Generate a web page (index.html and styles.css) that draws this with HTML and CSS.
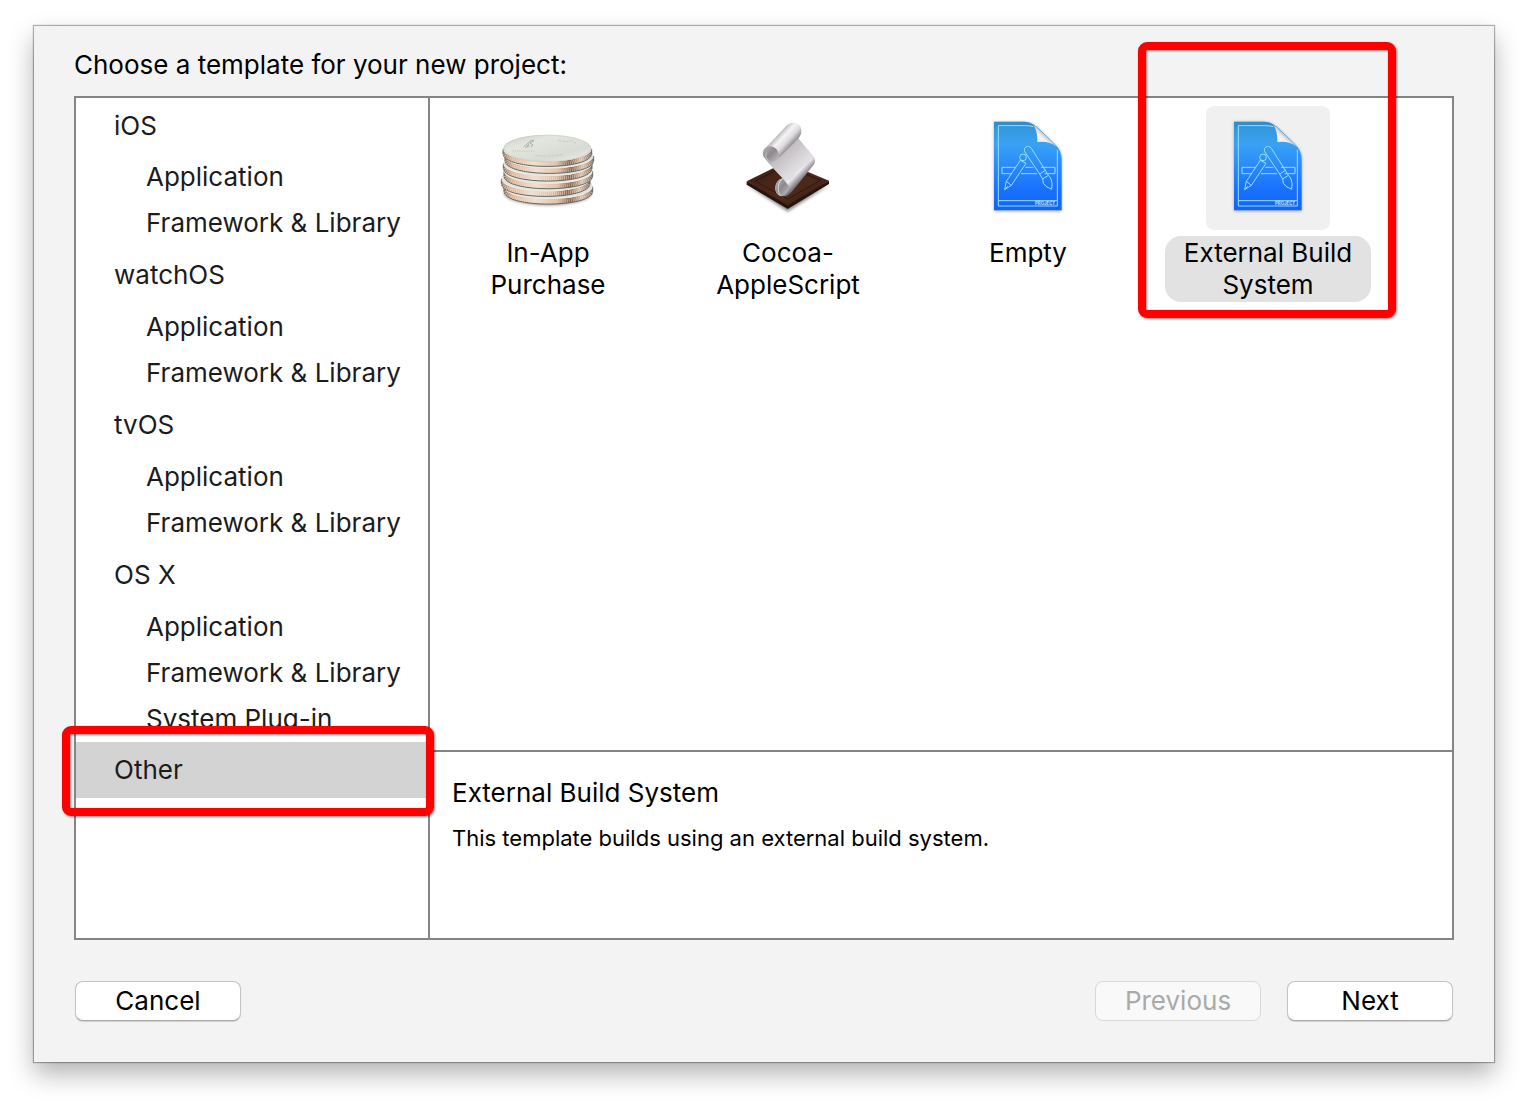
FILE: index.html
```html
<!DOCTYPE html>
<html lang="en">
<head>
  <meta charset="UTF-8">
  <meta name="viewport" content="width=device-width, initial-scale=1.0">
  <title>New Project</title>
  <link rel="stylesheet" href="styles.css">
</head>
<body>
  <main class="dialog">
    <h1>Choose a template for your new project:</h1>

    <div class="chooser">
      <!-- Platform list -->
      <nav class="sidebar">
        <section>
          <a class="platform" href="#ios">iOS</a>
          <ul>
            <li><a href="#ios-app">Application</a></li>
            <li><a href="#ios-lib">Framework &amp; Library</a></li>
          </ul>
        </section>
        <section>
          <a class="platform" href="#watchos">watchOS</a>
          <ul>
            <li><a href="#watchos-app">Application</a></li>
            <li><a href="#watchos-lib">Framework &amp; Library</a></li>
          </ul>
        </section>
        <section>
          <a class="platform" href="#tvos">tvOS</a>
          <ul>
            <li><a href="#tvos-app">Application</a></li>
            <li><a href="#tvos-lib">Framework &amp; Library</a></li>
          </ul>
        </section>
        <section>
          <a class="platform" href="#osx">OS X</a>
          <ul>
            <li><a href="#osx-app">Application</a></li>
            <li><a href="#osx-lib">Framework &amp; Library</a></li>
            <li><a href="#osx-plugin">System Plug-in</a></li>
          </ul>
        </section>
        <a class="platform selected" href="#other">Other<span class="highlight"></span></a>
      </nav>

      <div class="content">
        <!-- Template icons -->
        <div class="templates">
          <button type="button" class="template">
            <svg class="icon" viewBox="-12 -42 372 372" aria-hidden="true">
              <defs>
                <linearGradient id="copper">
                  <stop offset="0" stop-color="#94745f"/>
                  <stop offset=".1" stop-color="#dcb497"/>
                  <stop offset=".35" stop-color="#f0dccd"/>
                  <stop offset=".6" stop-color="#dfb89c"/>
                  <stop offset=".75" stop-color="#85604a"/>
                  <stop offset=".88" stop-color="#dcc0ab"/>
                  <stop offset="1" stop-color="#7d6a5e"/>
                </linearGradient>
                <linearGradient id="silver" x2="1" y2="1">
                  <stop offset="0" stop-color="#c9cdc6"/>
                  <stop offset=".3" stop-color="#e3e6df"/>
                  <stop offset=".7" stop-color="#d8dbd3"/>
                  <stop offset="1" stop-color="#f0f1ed"/>
                </linearGradient>
                <filter id="soft" x="-20%" y="-50%" width="140%" height="200%"><feGaussianBlur stdDeviation="4"/></filter>
                <g id="coin">
                  <path d="M0 46V59C0 110 266 110 266 59V46Z" fill="url(#copper)" stroke="#676860" stroke-width="3"/>
                  <path d="M4 59C14 100 252 100 262 59" fill="none" stroke="#fbeee3" stroke-width="11" stroke-dasharray="2 4" opacity=".6"/>
                  <ellipse cx="133" cy="43" rx="132" ry="40" fill="#e0e2dc"/>
                  <path d="M2 47C14 91 252 91 264 47" fill="none" stroke="#e9eae6" stroke-width="4"/>
                </g>
              </defs>
              <ellipse cx="174" cy="218" rx="132" ry="38" fill="#555" opacity=".65" filter="url(#soft)"/>
              <use href="#coin" x="42" y="155"/>
              <use href="#coin" x="34" y="132"/>
              <use href="#coin" x="42" y="109"/>
              <use href="#coin" x="40" y="86"/>
              <use href="#coin" x="45" y="63"/>
              <use href="#coin" x="39" y="42"/>
              <ellipse cx="172" cy="85" rx="130" ry="40" fill="url(#silver)" stroke="#aeb2a9" stroke-width="1"/>
              <path d="M100 81l12-9 7-8 13-3-12 9 8 4-5 8M117 71l-6 9M106 83l13-6" fill="none" stroke="#8d9388" stroke-width="2"/>
              <path d="M67 92q32 3 64 1" fill="none" stroke="#d8c8ba" stroke-width="5" stroke-dasharray="3 4"/>
              <path d="M136 106q43 6 82-3M205 61l24 5 12-5 20 10" fill="none" stroke="#c6cac2" stroke-width="3" stroke-dasharray="8 4"/>
            </svg>
            <span class="label">In-App<br>Purchase</span>
          </button>

          <button type="button" class="template">
            <svg class="icon" viewBox="-12 -12 372 372" aria-hidden="true">
              <defs>
                <linearGradient id="wood" x2="1" y2="1">
                  <stop offset="0" stop-color="#3c2015"/>
                  <stop offset=".6" stop-color="#4c2a1b"/>
                  <stop offset="1" stop-color="#321a11"/>
                </linearGradient>
                <linearGradient id="paper" gradientUnits="userSpaceOnUse" x1="130" y1="110" x2="215" y2="205">
                  <stop offset="0" stop-color="#9b979b"/>
                  <stop offset=".3" stop-color="#c4c0c4"/>
                  <stop offset=".7" stop-color="#dedbde"/>
                  <stop offset="1" stop-color="#e8e6e8"/>
                </linearGradient>
                <linearGradient id="roll" gradientUnits="userSpaceOnUse" x1="140" y1="75" x2="178" y2="110">
                  <stop offset="0" stop-color="#b5b2b5"/>
                  <stop offset=".35" stop-color="#f5f4f5"/>
                  <stop offset=".7" stop-color="#dddbdd"/>
                  <stop offset="1" stop-color="#9a969a"/>
                </linearGradient>
                <linearGradient id="roll-end" x2="1" y2="1">
                  <stop offset="0" stop-color="#b9b6b9"/>
                  <stop offset=".5" stop-color="#8d888c"/>
                  <stop offset="1" stop-color="#c3c0c3"/>
                </linearGradient>
                <linearGradient id="lower-roll" gradientUnits="userSpaceOnUse" x1="190" y1="172" x2="222" y2="203">
                  <stop offset="0" stop-color="#d3d0d3"/>
                  <stop offset=".45" stop-color="#efedef"/>
                  <stop offset="1" stop-color="#777276"/>
                </linearGradient>
              </defs>
              <path d="M48 224L173 305 300 224 173 280Z" fill="#555" opacity=".65" filter="url(#soft)"/>
              <path d="M50 214V224L173 297 297 222V212L173 275Z" fill="#28140d"/>
              <path d="M50 214L165 157 297 212 173 286Z" fill="url(#wood)"/>
              <path d="M75 214L165 167 272 211 173 268Z" fill="none" stroke="#2b150e" stroke-width="3"/>
              <path d="M77 217L173 271 270 214" fill="none" stroke="#60391f" stroke-width="1"/>
              <!-- sheet between the two rolls -->
              <path d="M99 134Q103 148 158 205Q176 222 180 240L250 160 253 142 206 86 145 95Z" fill="url(#paper)"/>
              <!-- bottom roll -->
              <path d="M158 205C146 207 136 219 136 235 136 252 148 260 162 259 172 258 181 251 188 242L250 166C257 158 257 146 248 136 251 147 247 151 240 156 220 165 194 191 183 212Z" fill="url(#lower-roll)"/>
              <path d="M158 205C145 208 136 219 136 235 137 247 142 254 151 257 165 256 177 246 177 229Z" fill="url(#roll-end)"/>
              <path d="M158 205C144 218 140 238 151 257" fill="none" stroke="#dddadd" stroke-width="3"/>
              <!-- top roll -->
              <path d="M107 113L168 49C180 34 205 35 212 51Q218 69 207 83L146 145C147 128 134 108 107 113Z" fill="url(#roll)"/>
              <path d="M99 134C97 116 109 107 124 109 143 113 150 132 144 146 138 153 128 157 118 153 109 148 101 142 99 134Z" fill="url(#roll-end)"/>
              <path d="M118 153C108 148 104 138 110 127" fill="none" stroke="#b9b5b9" stroke-width="4"/>
            </svg>
            <span class="label">Cocoa-<br>AppleScript</span>
          </button>

          <button type="button" class="template">
            <svg class="icon" viewBox="-42 -12 372 372" aria-hidden="true">
              <defs>
                <linearGradient id="blueprint" x2="0" y2="1">
                  <stop offset="0" stop-color="#2c8bc8"/>
                  <stop offset=".08" stop-color="#3598dc"/>
                  <stop offset=".25" stop-color="#39a2f5"/>
                  <stop offset=".8" stop-color="#176eff"/>
                  <stop offset="1" stop-color="#1264ef"/>
                </linearGradient>
                <linearGradient id="fold" x1="0" y1="1" x2="1" y2="0">
                  <stop offset="0" stop-color="#fff"/>
                  <stop offset=".4" stop-color="#f0f0f0"/>
                  <stop offset=".55" stop-color="#bbb"/>
                </linearGradient>
                <g id="project">
                  <path d="M42 36H132C151 36 166 48 178 60L225 105Q245 125 245 151V304H42Z" fill="#555" opacity=".5" filter="url(#soft)"/>
                  <path d="M42 35H132C151 35 166 45 178 57L225 103Q245 122 245 148V301H42Z" fill="url(#blueprint)"/>
                  <path d="M160 45Q173 62 172 96 205 91 231 110L178 59Q170 50 160 45Z" fill="url(#fold)"/>
                  <g fill="none" stroke="#9bddff" stroke-width="3">
                    <path d="M160 50Q151 47 135 47H55V288H232V119M55 272H232"/>
                    <path d="M136 172H160M123 191H171M107 172H66V191H96M183 172H225V191H194"/>
                    <path d="M121 151L138 160 94 226 74 239 79 214ZM79 214L94 226M74 239L83 229"/>
                    <circle cx="129" cy="142" r="10"/>
                    <path d="M179 192L134 125C129 112 144 103 154 115L196 181ZM179 192L188 207 205 196 196 181M188 207Q187 222 198 229L215 238Q218 220 214 210 211 200 205 196"/>
                  </g>
                  <text class="project-mark" x="165" y="284">PROJECT</text>
                </g>
              </defs>
              <use href="#project"/>
            </svg>
            <span class="label">Empty</span>
          </button>

          <button type="button" class="template selected">
            <svg class="icon" viewBox="-42 -12 372 372" aria-hidden="true"><use href="#project"/></svg>
            <span class="label">External Build<br>System</span>
            <span class="highlight"></span>
          </button>
        </div>

        <!-- Description of the selected template -->
        <div class="details">
          <h2>External Build System</h2>
          <p>This template builds using an external build system.</p>
        </div>
      </div>
    </div>

    <div class="actions">
      <button type="button" class="push">Cancel</button>
      <div class="steps">
        <button type="button" class="push" disabled>Previous</button>
        <button type="button" class="push">Next</button>
      </div>
    </div>
  </main>
</body>
</html>
```

FILE: styles.css
```css
* {
  box-sizing: border-box;
}

body {
  display: flex;
  min-height: 100vh;
  margin: 0;
  padding: 26px 34px 42px;
  background: white;
  color: black;
  font-family: Inter, "Liberation Sans", sans-serif;
  font-size: 26px;
  line-height: 32px;
}

h1, h2, p, ul {
  margin: 0;
  padding: 0;
  font-size: inherit;
  font-weight: normal;
}

a {
  color: inherit;
  text-decoration: none;
}

button {
  font: inherit;
  color: inherit;
}

/* Dialog sheet */
.dialog {
  flex: 1;
  display: flex;
  flex-direction: column;
  padding: 23px 40px 41px;
  background: #f3f3f3;
  box-shadow: 0 0 1px 1px rgba(0, 0, 0, 0.3), 0 12px 24px rgba(0, 0, 0, 0.3);
}

h1 {
  margin-bottom: 15px;
}

.chooser {
  flex: 1;
  display: flex;
  border: 2px solid #858585;
  background: white;
}

/* Sidebar */
.sidebar {
  width: 354px;
  border-right: 2px solid #858585;
  color: #1c1c1c;
}

.sidebar ul {
  list-style: none;
}

.sidebar section + section {
  padding-top: 1px;
}

.sidebar section + section ul {
  padding-top: 1px;
}

.sidebar a {
  display: block;
  padding: 7px 0 7px 70px;
}

.sidebar .platform {
  position: relative;
  padding: 12px 0 12px 38px;
}

.sidebar .selected {
  background: #d3d3d3;
}

/* Template grid */
.content {
  flex: 1;
  display: flex;
  flex-direction: column;
}

.templates {
  flex: 1;
  display: grid;
  grid-template-columns: repeat(auto-fill, 206px);
  align-content: start;
  gap: 34px;
  padding: 8px 15px;
}

.template {
  position: relative;
  display: flex;
  flex-direction: column;
  align-items: center;
  gap: 6px;
  padding: 0;
  border: none;
  background: none;
}

.icon {
  width: 124px;
  height: 124px;
  border-radius: 8px;
}

.label {
  width: 100%;
  padding: 1px 0;
  border-radius: 16px;
}

.template.selected .icon {
  background: #f0f0f0;
}

.template.selected .label {
  background: #e2e2e2;
}

.project-mark {
  fill: #c4e8ff;
  font-size: 13px;
  font-weight: bold;
}

/* Red marker frames */
.highlight {
  position: absolute;
  z-index: 1;
  inset: -16px -6px -18px -14px;
  border: 8px solid #ff0000;
  border-radius: 9px;
  filter: drop-shadow(1px 1px 1px rgba(0, 0, 0, 0.5));
  pointer-events: none;
}

.template .highlight {
  inset: -64px -25px -16px -27px;
}

/* Details */
.details {
  min-height: 188px;
  padding: 25px 22px;
  border-top: 2px solid #858585;
}

.details p {
  margin-top: 13px;
  font-size: 22px;
}

/* Bottom buttons */
.actions {
  display: flex;
  justify-content: space-between;
  margin-top: 41px;
  padding: 0 1px;
}

.steps {
  display: flex;
  gap: 26px;
}

.push {
  width: 166px;
  height: 40px;
  padding: 0;
  border: 1px solid #c4c4c4;
  border-bottom-color: #aaa;
  border-radius: 8px;
  background: white;
  box-shadow: 0 1px 1px rgba(0, 0, 0, 0.15);
}

.push:disabled {
  border-color: #d8d8d8;
  background: #f9f9f9;
  color: #aaa;
  box-shadow: none;
}
```
